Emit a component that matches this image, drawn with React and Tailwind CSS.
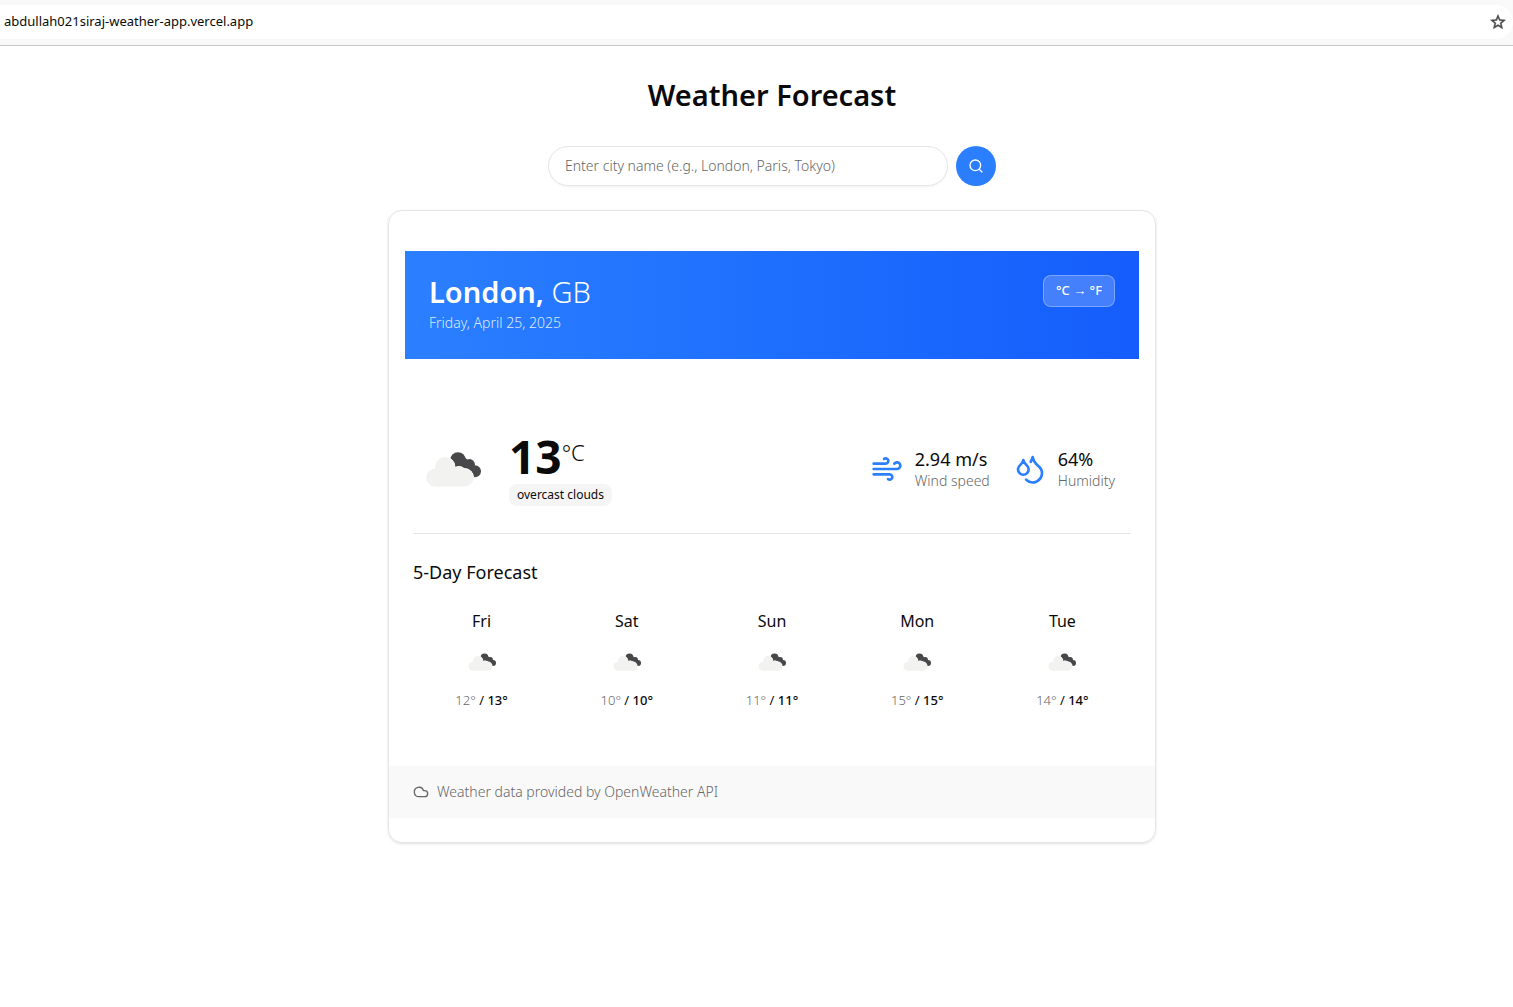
import React, { useState } from "react";
import { Cloud, Droplets, Search, Wind } from "lucide-react";

const days = [
  { name: "Fri", min: 12, max: 13 },
  { name: "Sat", min: 10, max: 10 },
  { name: "Sun", min: 11, max: 11 },
  { name: "Mon", min: 15, max: 15 },
  { name: "Tue", min: 14, max: 14 },
];

function CloudShapes(props) {
  return (
    <g {...props}>
      <circle cx="15" cy="31.5" r="9" />
      <circle cx="25" cy="21" r="10" />
      <circle cx="44.5" cy="31.5" r="9" />
      <circle cx="39" cy="28" r="7.5" />
      <rect x="15" y="24" width="29.5" height="16.5" />
    </g>
  );
}

function OvercastIcon({ className }) {
  return (
    <svg viewBox="-7 -17 80 80" className={className} role="img" aria-label="overcast clouds">
      <g fill="#48484a">
        <circle cx="38" cy="14" r="7.8" />
        <circle cx="49.5" cy="18.5" r="5.4" />
        <circle cx="55" cy="25.2" r="6" />
        <path d="M42 9 50 16 58 28 51 30 42 24 34 20Z" />
      </g>
      <CloudShapes fill="#fff" stroke="#fff" strokeWidth="1" />
      <CloudShapes fill="#f2f2f1" />
    </svg>
  );
}

function Stat({ icon: Icon, value, label }) {
  return (
    <div className="flex items-center gap-3">
      <Icon className="size-8 text-[#2b7fff]" />
      <div className="pt-1">
        <p className="text-lg leading-5">{value}</p>
        <p className="text-sm leading-6 font-light text-[#666]">{label}</p>
      </div>
    </div>
  );
}

export default function App() {
  const [city, setCity] = useState("");
  return (
    <div className="min-h-screen bg-white font-['Noto_Sans','Open_Sans',sans-serif] text-[#0a0a0a]">
      <header className="border-b border-[#c8c8c8] bg-[#f9f9f9] pt-[5px] pb-1.5">
        <div className="flex h-[34px] items-center justify-between rounded-r-full bg-white pr-2 pl-1">
          <span className="text-[13px]">abdullah021siraj-weather-app.vercel.app</span>
          <button type="button" aria-label="Bookmark this page" className="text-[#474747]">
            <svg viewBox="0 0 24 24" className="size-[18px] -mr-0.5" fill="currentColor" stroke="currentColor" strokeWidth="0.6">
              <path d="m22 9.24-7.19-.62L12 2 9.19 8.63 2 9.24l5.46 4.73L5.82 21 12 17.27 18.18 21l-1.63-7.03L22 9.24zM12 15.4l-3.76 2.27 1-4.28-3.32-2.88 4.38-.38L12 6.1l1.71 4.04 4.38.38-3.32 2.88 1 4.28L12 15.4z" />
            </svg>
          </button>
        </div>
      </header>

      <main className="py-8 pl-[31px]">
        <h1 className="mb-[34px] text-center text-[29px] leading-[34px] font-semibold">Weather Forecast</h1>

        <form className="mx-auto mb-6 flex max-w-md gap-2" onSubmit={(e) => e.preventDefault()}>
          <input
            type="text"
            aria-label="City name"
            placeholder="Enter city name (e.g., London, Paris, Tokyo)"
            value={city}
            onChange={(e) => setCity(e.target.value)}
            className="h-10 min-w-0 flex-1 rounded-full border border-[#e5e5e5] px-4 pb-0.5 text-sm font-light shadow-xs placeholder:text-[#666]"
          />
          <button
            type="submit"
            aria-label="Search"
            className="flex size-10 items-center justify-center rounded-full bg-[#2b7fff] text-white"
          >
            <Search className="size-4" />
          </button>
        </form>

        <section className="mx-auto max-w-3xl rounded-[14px] border border-[#e5e5e5] py-6 shadow-sm">
          <div className="px-4 pt-4">
            <div className="flex items-start justify-between bg-linear-to-r from-[#2b7fff] to-[#155dfc] p-6 text-white">
              <div>
                <h2 className="text-[29px] leading-[34px] font-semibold">
                  London, <span className="font-light">GB</span>
                </h2>
                <p className="pt-1 pb-0.5 text-sm font-light text-[#dbeafe]">Friday, April 25, 2025</p>
              </div>
              <button
                type="button"
                className="h-8 rounded-lg border border-white/30 bg-white/20 px-3 text-[13px] font-medium"
              >
                °C → °F
              </button>
            </div>
          </div>

          <div className="px-6 pt-[70px]">
            <div className="flex items-center justify-between border-b border-[#e5e5e5] pb-6">
              <div className="flex items-center gap-4">
                <OvercastIcon className="size-20" />
                <div>
                  <div className="flex items-start">
                    <span className="text-[46px] leading-[48px] font-bold">13</span>
                    <span className="pt-1 text-[22px] leading-8 font-light">°C</span>
                  </div>
                  <span className="mt-1 block rounded-lg bg-[#f5f5f5] px-2 py-[3px] text-xs">
                    overcast clouds
                  </span>
                </div>
              </div>
              <div className="flex gap-6 pr-4">
                <Stat icon={Wind} value="2.94 m/s" label="Wind speed" />
                <Stat icon={Droplets} value="64%" label="Humidity" />
              </div>
            </div>

            <h3 className="mt-6 mb-4 text-lg leading-7">5-Day Forecast</h3>
            <div className="grid grid-cols-5 gap-2 pb-14">
              {days.map((d) => (
                <div key={d.name} className="flex flex-col items-center pt-2">
                  <p className="text-base leading-[22px]">{d.name}</p>
                  <OvercastIcon className="mt-2.5 mb-2 size-10" />
                  <p className="text-[13px] leading-5 font-medium">
                    <span className="font-light text-[#666]">{d.min}°</span>
                    <span className="font-normal"> / </span>
                    {d.max}°
                  </p>
                </div>
              ))}
            </div>
          </div>

          <footer className="flex items-center gap-2 bg-[#f9f9f9] px-6 py-4 text-sm font-light text-[#666]">
            <Cloud className="size-4" />
            Weather data provided by OpenWeather API
          </footer>
        </section>
      </main>
    </div>
  );
}
